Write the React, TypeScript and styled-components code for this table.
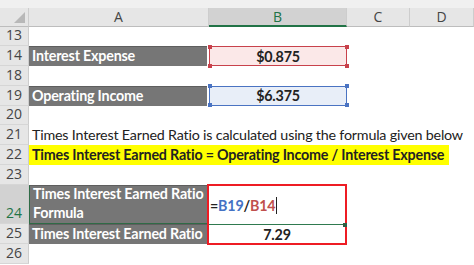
import React from 'react'
import styled, {createGlobalStyle, css} from 'styled-components'

const GlobalStyle = createGlobalStyle`
  html, body {
    margin: 0;
    padding: 0;
    background: #ffffff;
  }
  body {
    font-family: Lato, "Liberation Sans", sans-serif;
    color: #222;
    width: 474px;
    height: 265px;
    overflow: hidden;
  }
`

const ROW = 19.8

const cellFont = css`
  font-size: 14.3px;
  letter-spacing: -0.2px;
`

const Page = styled.div`
  width: 474px;
  height: 265px;
  overflow: hidden;
  display: flex;
  flex-direction: column;
`

const TopStrip = styled.div`
  flex: none;
  height: 8px;
  background: #f0f0f0;
`

const Sheet = styled.div`
  flex: none;
  display: grid;
  grid-template-columns: 29px 180px 138px 63px 1fr;
  grid-template-rows: 18.5px repeat(8, ${ROW}px) ${ROW * 2}px ${ROW}px ${ROW}px;
`

const Corner = styled.div`
  position: relative;
  background: #e6e6e6;
  border-right: 1px solid #cdcdcd;
  border-bottom: 1px solid #bdbdbd;
  &::after {
    content: '';
    position: absolute;
    right: 3px;
    bottom: 3px;
    width: 0;
    height: 0;
    border-left: 11px solid transparent;
    border-bottom: 11px solid #b8b8b8;
  }
`

const ColHead = styled.div<{ $active?: boolean }>`
  display: flex;
  align-items: center;
  justify-content: center;
  font-family: "Open Sans", sans-serif;
  font-size: 14px;
  color: #444;
  background: #e6e6e6;
  border-right: 1px solid #cdcdcd;
  border-bottom: 1px solid #bdbdbd;
  ${p => p.$active && css`
    background: #d2d2d2;
    color: #217346;
    border-bottom: 2px solid #217346;
  `}
`

const RowHead = styled.div<{ $active?: boolean }>`
  grid-column: 1;
  display: flex;
  align-items: flex-end;
  justify-content: center;
  padding-bottom: 1px;
  font-family: "Open Sans", sans-serif;
  font-size: 14px;
  line-height: 18px;
  color: #444;
  background: #e6e6e6;
  border-right: 1px solid #cdcdcd;
  border-bottom: 1px solid #d6d6d6;
  ${p => p.$active && css`
    background: #d2d2d2;
    color: #217346;
  `}
`

const Label = styled.div<{ $tall?: boolean }>`
  grid-column: 2;
  display: flex;
  flex-direction: column;
  justify-content: flex-end;
  padding: 0 3px 1px;
  margin-right: 2px;
  background: #767676;
  color: #fff;
  font-weight: 700;
  ${cellFont};
  line-height: 19px;
  white-space: nowrap;
  border-top: 1px solid #5e5e5e;
  ${p => p.$tall && css`
    border-left: 1px solid #2f6b46;
    border-bottom: 1px solid #2f6b46;
  `}
`

const refColors = {
  red: {line: '#c8414b', fill: '#fbe8e8'},
  blue: {line: '#4a73c2', fill: '#e8eef8'},
}

const RefCell = styled.div<{ $ref: 'red' | 'blue' }>`
  grid-column: 3;
  position: relative;
  display: flex;
  align-items: center;
  justify-content: center;
  font-weight: 700;
  ${cellFont};
  background: ${p => refColors[p.$ref].fill};
  border: 1px solid ${p => refColors[p.$ref].line};
`

const Handle = styled.span<{ $ref: 'red' | 'blue'; $x: 'left' | 'right'; $y: 'top' | 'bottom' }>`
  position: absolute;
  width: 4px;
  height: 4px;
  background: ${p => refColors[p.$ref].line};
  ${p => p.$x}: -2.5px;
  ${p => p.$y}: -2.5px;
`

const TextCell = styled.div<{ $highlight?: boolean }>`
  grid-column: 2 / -1;
  display: flex;
  align-items: flex-end;
  padding: 0 0 1px 3px;
  ${cellFont};
  line-height: 19px;
  white-space: nowrap;
  ${p => p.$highlight && css`
    justify-self: start;
    background: #ffff00;
    font-weight: 700;
    padding-right: 5px;
  `}
`

const Range = styled.div`
  grid-column: 3;
  grid-row: 10 / span 2;
  margin: -1px 0 -1px -2px;
  display: flex;
  flex-direction: column;
  border: 2.5px solid #ee1c24;
`

const FormulaCell = styled.div`
  flex: 1;
  position: relative;
  display: flex;
  align-items: center;
  padding-left: 1px;
  font-weight: 700;
  ${cellFont};
  border-bottom: 1.5px solid #2f7a4f;
  &::after {
    content: '';
    position: absolute;
    right: -2px;
    bottom: -3px;
    width: 4px;
    height: 4px;
    background: #2f5f45;
  }
`

const Ref = styled.span<{ $c: string }>`
  color: ${p => p.$c};
`

const Caret = styled.span`
  display: inline-block;
  width: 1px;
  height: 17px;
  margin-left: 1px;
  background: #222;
`

const ValueCell = styled.div`
  flex: none;
  height: 18px;
  display: flex;
  align-items: center;
  justify-content: center;
  font-weight: 700;
  ${cellFont};
`

function RefBox({row, value, tone}: { row: number; value: string; tone: 'red' | 'blue' }) {
  return (
    <RefCell $ref={tone} style={{gridRow: row}}>
      {value}
      <Handle $ref={tone} $x="left" $y="top"/>
      <Handle $ref={tone} $x="right" $y="top"/>
      <Handle $ref={tone} $x="left" $y="bottom"/>
      <Handle $ref={tone} $x="right" $y="bottom"/>
    </RefCell>
  )
}

export default function App() {
  const rowNums = [13, 14, 18, 19, 20, 21, 22, 23, 24, 25, 26]
  return (
    <Page>
      <GlobalStyle/>
      <TopStrip/>
      <Sheet>
        <Corner/>
        <ColHead>A</ColHead>
        <ColHead $active>B</ColHead>
        <ColHead>C</ColHead>
        <ColHead>D</ColHead>

        {rowNums.map((n, i) => (
          <RowHead key={n} $active={n === 24} style={{gridRow: i + 2}}>{n}</RowHead>
        ))}

        <Label style={{gridRow: 3}}>Interest Expense</Label>
        <RefBox row={3} value="$0.875" tone="red"/>

        <Label style={{gridRow: 5}}>Operating Income</Label>
        <RefBox row={5} value="$6.375" tone="blue"/>

        <TextCell style={{gridRow: 7}}>
          Times Interest Earned Ratio is calculated using the formula given below
        </TextCell>
        <TextCell $highlight style={{gridRow: 8}}>
          Times Interest Earned Ratio = Operating Income / Interest Expense
        </TextCell>

        <Label $tall style={{gridRow: 10}}>
          <span>Times Interest Earned Ratio</span>
          <span>Formula</span>
        </Label>
        <Label style={{gridRow: 11}}>Times Interest Earned Ratio</Label>

        <Range>
          <FormulaCell>
            =<Ref $c="#4472c4">B19</Ref>/<Ref $c="#c0504d">B14</Ref><Caret/>
          </FormulaCell>
          <ValueCell>7.29</ValueCell>
        </Range>
      </Sheet>
    </Page>
  )
}
